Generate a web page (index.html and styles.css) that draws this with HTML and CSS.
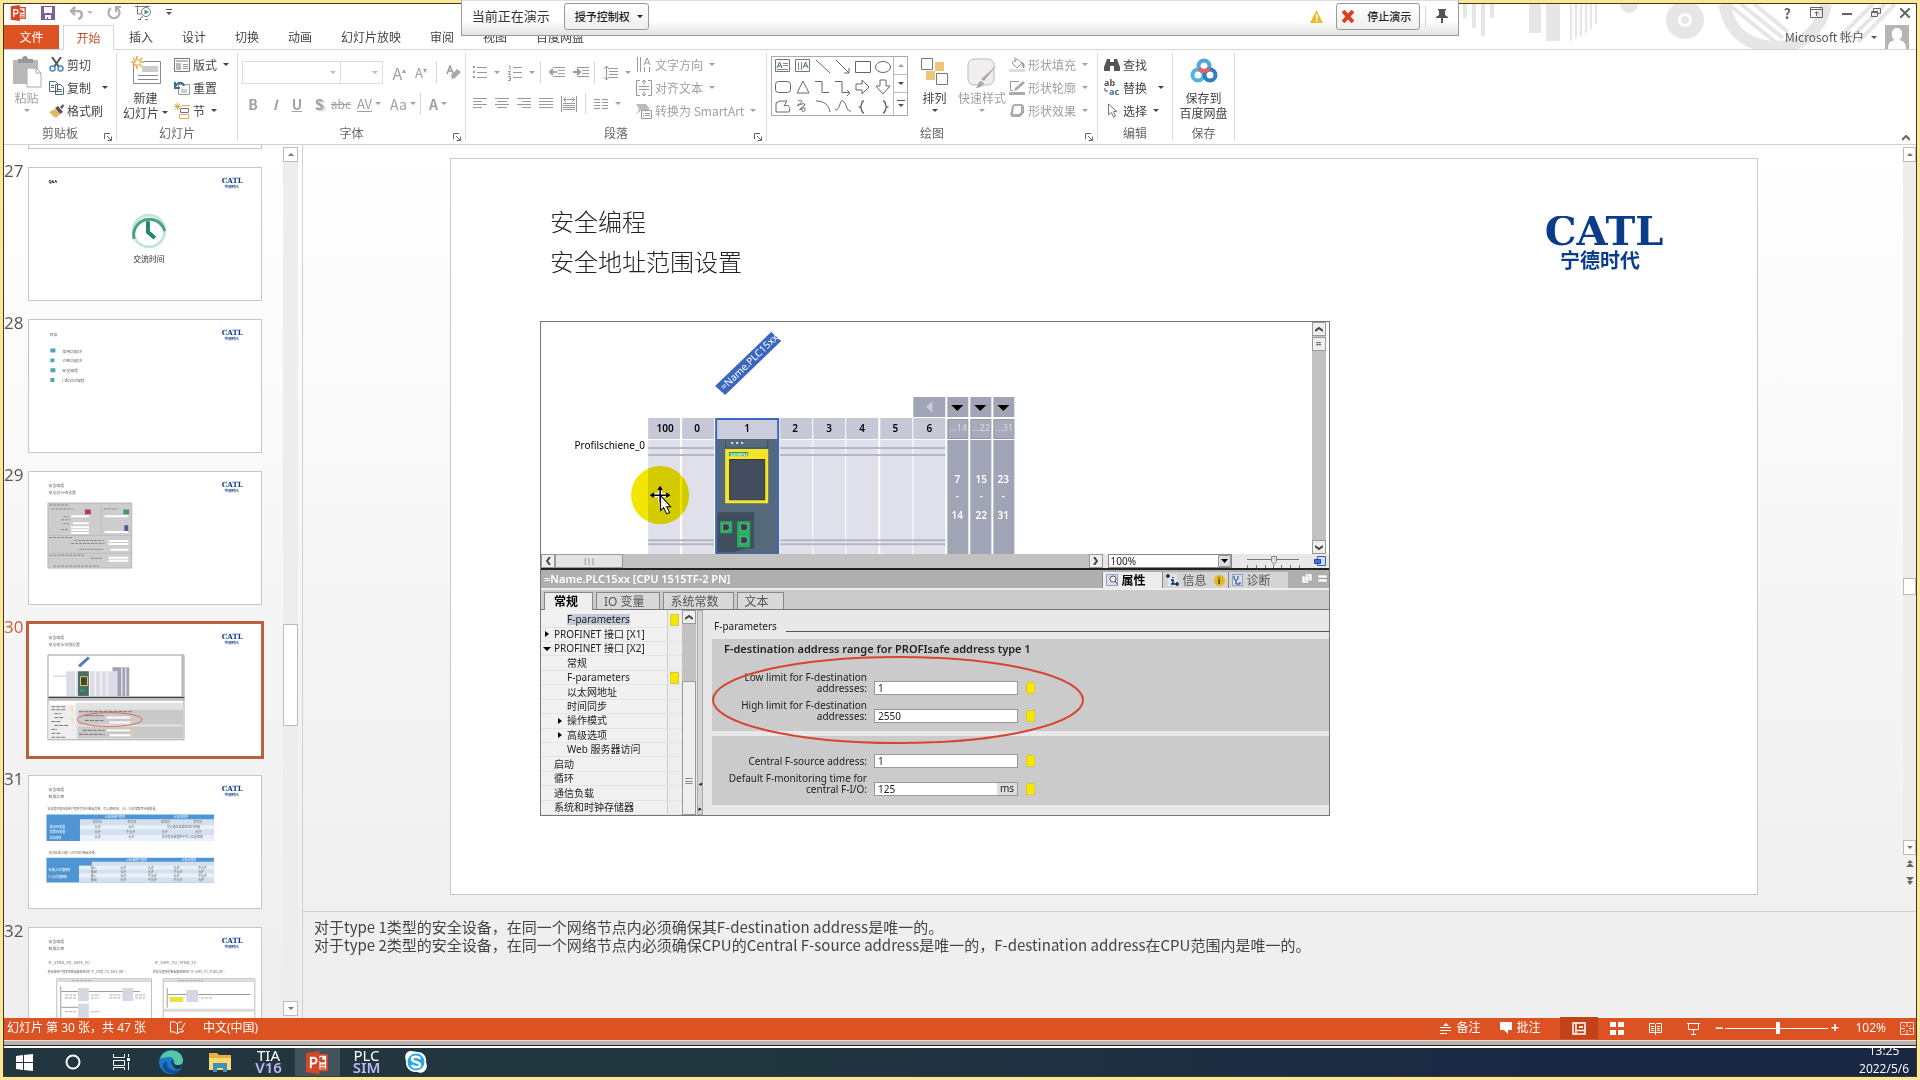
FILE: index.html
```html
<!DOCTYPE html>
<html lang="zh-CN">
<head>
    <meta charset="UTF-8">
    <meta name="viewport" content="width=device-width, initial-scale=1.0">
    <title>PowerPoint</title>
    <link rel="stylesheet" href="styles.css">
</head>
<body>
    <svg class="sprite">
        <symbol id="logo" viewBox="0 0 128 56">
            <text class="logo-latin" x="64" y="29" text-anchor="middle">CATL</text>
            <text class="logo-cn" x="60" y="52" text-anchor="middle">宁德时代</text>
        </symbol>
        <symbol id="ppt" viewBox="0 0 24 24">
            <path fill="#fff" stroke="#d24726" stroke-width="2" d="M12 4h10v16H12z"/>
            <path fill="#d24726" d="M0 2l14-2v24L0 22zM15 14h5v1.500h-5zM15 17h5v1.500h-5zM17 6a3 3 0 1 0 3 3h-3z"/>
            <path fill="none" stroke="#fff" stroke-width="2" d="M5 18V7h3a3 3 0 0 1 0 6H5"/>
        </symbol>
        <symbol id="launch" viewBox="0 0 8 8">
            <path fill="none" stroke="currentColor" d="M.5 6V.5H6M3 3l4 4M7.500 3.500v4h-4"/>
        </symbol>
        <symbol id="indent" viewBox="0 0 16 14">
            <path fill="none" stroke="currentColor" d="M4 1.500h12M9 4.500h7M9 7.500h7M4 10.500h12"/>
            <path fill="none" stroke="currentColor" stroke-width="2" d="M8 6H2M4 3L1 6l3 3"/>
        </symbol>
    </svg>

    <div class="desktop">
        <header class="titlebar">
            <div class="quick">
                <svg width="17" height="16" viewBox="0 0 24 24"><use href="#ppt"/></svg>
                <button aria-label="保存"><svg width="14" height="14" viewBox="0 0 14 14"><path fill="#7b5fa0" d="M0 0h14v14H0z"/><path fill="#fff" d="M3 1h8v6H3zM4 9h6v4H7v-2H6v2H4z"/></svg></button>
                <button aria-label="撤消"><svg width="15" height="14" viewBox="0 0 15 14"><path fill="none" stroke="#b0b0b0" stroke-width="2.500" d="M6 1L2 5l4 4M2 5h7c5 0 5 7 0 8"/></svg><i class="caret pale"></i></button>
                <button aria-label="重复"><svg width="14" height="14" viewBox="0 0 14 14"><path fill="none" stroke="#b0b0b0" stroke-width="2.200" d="M4 2a5.500 5.500 0 1 0 6 0M9 6V1h5"/></svg></button>
                <button aria-label="放映"><svg width="17" height="15" viewBox="0 0 17 15"><path fill="none" stroke="#777" d="M0 1.500h15M2.500 2v7h4M5 14l3-3M3 14.500h3M10 14.500h3"/><circle cx="11" cy="7" r="4.500" fill="#fff" stroke="#777"/><path fill="#4c8f8a" d="M9.500 4.500L14 7l-4.500 2.500z"/></svg></button>
                <button aria-label="自定义"><svg width="6" height="7" viewBox="0 0 6 7"><path fill="#555" d="M0 0h6v1H0zM0 3h6L3 6z"/></svg></button>
            </div>
            <svg class="pattern" width="440" height="45" viewBox="0 0 440 45">
                <g fill="none" stroke="#e6e6e6">
                    <path stroke-width="4" d="M2 0v14M11 0v24M20 0v32M29 0v14"/>
                    <path stroke-width="12" d="M72 0v29"/><path stroke-width="14" d="M90 0v37"/>
                    <path stroke-width="2" d="M108 0v37M113 0v34M118 0v32M123 0v29M128 0v25M133 0v20"/>
                    <circle cx="222" cy="16" r="13" stroke-width="12"/>
                    <path stroke-width="12" d="M261 0c6 30 25 42 52 43 28 0 46-20 50-43"/>
                    <path stroke-width="4" d="M265 0l50 40M278 0l42 34M291 0l34 28M395 38L432 0M388 34L422 0M380 30L410 0"/>
                </g>
                <circle cx="222" cy="16" r="4" fill="#e6e6e6"/><circle cx="166" cy="0" r="9" fill="#e6e6e6"/>
            </svg>
            <div class="winbuttons">
                <button>?</button>
                <button aria-label="功能区"><svg width="13" height="11" viewBox="0 0 13 11"><path fill="none" stroke="#666" d="M.5.5h12v10H.5zM1 2.500h11M6.500 9V5M4.500 6.500l2-2 2 2"/></svg></button>
                <button aria-label="最小化"><svg width="10" height="11"><path fill="#666" d="M0 6h10v2H0z"/></svg></button>
                <button aria-label="还原"><svg width="10" height="11" viewBox="0 0 10 11"><path fill="none" stroke="#666" d="M2.500 4V1.500h7v5H7M.5 4.500h6v5h-6zM0 5.500h7"/></svg></button>
                <button aria-label="关闭"><svg width="10" height="10" viewBox="0 0 10 10"><path stroke="#666" stroke-width="2" d="M0 0l10 10M10 0L0 10"/></svg></button>
            </div>
        </header>

        <nav class="tabs">
            <button class="file">文件</button>
            <button class="active">开始</button>
            <button>插入</button>
            <button>设计</button>
            <button>切换</button>
            <button>动画</button>
            <button>幻灯片放映</button>
            <button>审阅</button>
            <button>视图</button>
            <button>百度网盘</button>
            <a href="#" class="account">Microsoft 帐户 <i class="caret"></i>
                <svg width="24" height="24" viewBox="0 0 24 24"><path fill="#b5b5b5" d="M0 0h24v24H0z"/><path fill="#fff" d="M12 3c7 0 6 11 2 12 5 1 7 3 7 9H3c0-6 2-8 7-9C6 14 5 3 12 3z"/></svg>
            </a>
        </nav>

        <section class="ribbon">
            <div class="group clipboard">
                <div class="controls">
                    <button class="big off">
                        <svg width="30" height="32" viewBox="0 0 30 32"><path fill="#b9b9b9" d="M1 4h25v24H1z"/><path fill="#999" d="M6 3h4c0-4 6-4 6 0h5v4H6z"/><path fill="#fff" stroke="#aaa" d="M15 12h9l5 5v14H15z"/><path fill="none" stroke="#aaa" d="M24 12v5h5"/></svg>
                        <span>粘贴</span><i class="caret"></i>
                    </button>
                    <div class="stack">
                        <button><svg width="15" height="15" viewBox="0 0 15 15"><path stroke="#555" stroke-width="2" d="M3 0l7 10M12 0L5 10"/><g fill="none" stroke="#4a87b8" stroke-width="1.500"><circle cx="3.500" cy="11.500" r="2.500"/><circle cx="11.500" cy="11.500" r="2.500"/></g></svg>剪切</button>
                        <button><svg width="15" height="14" viewBox="0 0 15 14"><path fill="#fff" stroke="#4f6b82" d="M.5.5h6l2 2v8h-8zM6.500 3.500h5l3 3v7h-8z"/><path stroke="#4f6b82" d="M2 4.500h3M2 6.500h3M8 8.500h5M8 10.500h5"/></svg>复制<i class="caret wide"></i></button>
                        <button><svg width="15" height="14" viewBox="0 0 15 14"><path fill="#e6b668" d="M0 8l6-3 5 5-4 4-3-2z"/><path fill="#555" d="M6 4l3-2 5 6-3 2zM11 3l3-3 1 2-2 3z"/></svg>格式刷</button>
                    </div>
                </div>
                <footer>剪贴板<svg width="8" height="8"><use href="#launch"/></svg></footer>
            </div>

            <div class="group slides">
                <div class="controls">
                    <button class="big">
                        <svg width="30" height="30" viewBox="0 0 30 30"><path fill="#fff" stroke="#888" d="M2.500 5.500h27v22h-27z"/><path fill="#ccc" d="M11 10h16v6H11z"/><path stroke="#888" d="M7 19.500h20M7 23.500h20"/><path stroke="#e9bd6a" stroke-width="2" d="M6 0v13M0 6h13M2 2l9 9M11 2l-9 9"/><circle cx="6.500" cy="6.500" r="2" fill="#fff"/></svg>
                        <span>新建</span><span>幻灯片<i class="caret"></i></span>
                    </button>
                    <div class="stack">
                        <button><svg width="16" height="14" viewBox="0 0 16 14"><path fill="#fff" stroke="#777" d="M.5.500h15v13H.5z"/><path fill="#bbb" d="M2 2h12v2H2zM2 5h5v7H2z"/><path stroke="#999" d="M9 6.500h5M9 8.500h5M9 10.500h5"/></svg>版式<i class="caret"></i></button>
                        <button><svg width="16" height="14" viewBox="0 0 16 14"><path fill="#fff" stroke="#999" d="M4.500 3.500h11v10h-11z"/><path fill="#ccc" d="M7 8h6v4H7z"/><path fill="none" stroke="#3b6f97" stroke-width="2" d="M1 1v6h5M1 6c3-6 8-5 9-1"/></svg>重置</button>
                        <button><svg width="16" height="16" viewBox="0 0 16 16"><path stroke="#e3ab55" d="M3.500 0v7M0 3.500h7M1 1l5 5M6 1L1 6M8 2.500h8"/><path fill="none" stroke="#777" d="M6.500 5.500h8v4h-8z"/><path fill="none" stroke="#e3ab55" d="M5.500 11.500h9v4h-9z"/></svg>节<i class="caret"></i></button>
                    </div>
                </div>
                <footer>幻灯片</footer>
            </div>

            <div class="group font off">
                <div class="controls rows">
                    <div class="line">
                        <select class="face" aria-label="字体"><option></option></select><select class="size" aria-label="字号"><option></option></select>
                        <button class="big-a">A<sup>▴</sup></button>
                        <button class="small-a">A<sup>▾</sup></button>
                        <i class="bar"></i>
                        <button aria-label="清除格式"><svg width="15" height="15" viewBox="0 0 15 15"><path fill="none" stroke="#999" stroke-width="1.500" d="M1 9l3-8 3 7M2 6h4"/><path fill="#aaa" d="M5 10l6-6 4 3-6 6-3 1z"/></svg></button>
                    </div>
                    <div class="line letters">
                        <button><b>B</b></button><button><b><em>I</em></b></button><button><b><u>U</u></b></button><button><b class="shadow">S</b></button><button><s>abc</s></button>
                        <button class="drop"><span class="spacing">AV</span><i class="caret"></i></button>
                        <button class="drop">Aa<i class="caret"></i></button>
                        <i class="bar"></i>
                        <button class="drop"><b>A</b><i class="caret"></i></button>
                    </div>
                </div>
                <footer>字体<svg width="8" height="8"><use href="#launch"/></svg></footer>
            </div>

            <div class="group paragraph off">
                <div class="controls">
                    <div class="rows">
                        <div class="line">
                            <button class="drop"><svg width="14" height="15" viewBox="0 0 14 15"><path stroke="#999" d="M4 2.500h10M4 7.500h10M4 12.500h10"/><path fill="#999" d="M0 1h2v2H0zM0 6h2v2H0zM0 11h2v2H0z"/></svg><i class="caret"></i></button>
                            <button class="drop"><svg width="14" height="16" viewBox="0 0 14 16"><path stroke="#999" d="M5 2.500h9M5 7.500h9M5 12.500h9"/><path fill="none" stroke="#999" d="M1 1h1v4M0 6.500h2.500L.500 9.500H3M0 11.500h2.500v4H0M1 13.500h1"/></svg><i class="caret"></i></button>
                            <i class="bar"></i>
                            <button><svg width="16" height="14"><use href="#indent"/></svg></button>
                            <button><svg width="16" height="14" viewBox="0 0 16 14"><path fill="none" stroke="#999" d="M4 1.500h12M9 4.500h7M9 7.500h7M4 10.500h12"/><path fill="none" stroke="#999" stroke-width="2" d="M0 6h7M4 3l3 3-3 3"/></svg></button>
                            <i class="bar"></i>
                            <button class="drop"><svg width="15" height="16" viewBox="0 0 15 16"><path fill="none" stroke="#999" d="M6 3.500h9M6 6.500h9M6 9.500h9M6 12.500h9M3.500 1v14M1 4l2.500-3L6 4M1 12l2.500 3L6 12"/></svg><i class="caret"></i></button>
                        </div>
                        <div class="line aligns">
                            <button><svg width="14" height="12" viewBox="0 0 14 12"><path stroke="#999" d="M0 .5h14M0 3.500h9M0 6.500h14M0 9.500h9"/></svg></button>
                            <button><svg width="14" height="12" viewBox="0 0 14 12"><path stroke="#999" d="M0 .5h14M2 3.500h10M0 6.500h14M2 9.500h10"/></svg></button>
                            <button><svg width="14" height="12" viewBox="0 0 14 12"><path stroke="#999" d="M0 .5h14M5 3.500h9M0 6.500h14M5 9.500h9"/></svg></button>
                            <button><svg width="14" height="12" viewBox="0 0 14 12"><path stroke="#999" d="M0 .5h14M0 3.500h14M0 6.500h14M0 9.500h14"/></svg></button>
                            <button><svg width="16" height="16" viewBox="0 0 16 16"><path fill="none" stroke="#999" d="M.5 0v16M15.500 0v16M3 3.500h10M5 1L2.500 3.500 5 6M11 1l2.500 2.500L11 6M2 7.500h12M2 9.500h12M2 11.500h12M2 13.500h12"/></svg></button>
                            <i class="bar"></i>
                            <button class="drop"><svg width="14" height="12" viewBox="0 0 14 12"><path stroke="#999" d="M0 1.500h6M8 1.500h6M0 4.500h6M8 4.500h6M0 7.500h6M8 7.500h6M0 10.500h6M8 10.500h6"/></svg><i class="caret"></i></button>
                        </div>
                    </div>
                    <div class="stack">
                        <button><svg width="16" height="16" viewBox="0 0 16 16"><path fill="none" stroke="#999" d="M1.500 0v15M4.500 0v15M8.500 10v5M13.500 10v5M8 8l3-7 3 7M9 6h4"/></svg>文字方向<i class="caret"></i></button>
                        <button><svg width="16" height="16" viewBox="0 0 16 16"><path fill="none" stroke="#999" d="M4 .5H.5v15H4M12 .5h3.500v15H12M3 6.500h10M3 9.500h10M8 0v5M6 2l2-2 2 2M8 11v5M6 14l2 2 2-2"/></svg>对齐文本<i class="caret"></i></button>
                        <button><svg width="16" height="16" viewBox="0 0 16 16"><path fill="#bbb" d="M0 1h10l4 5-3 1H5l-5 5 3-6z"/><path fill="#fff" stroke="#999" d="M5.500 7.500h10v8h-10z"/><path stroke="#999" d="M7 10.500h1M9 10.500h5M7 12.500h1M9 12.500h5"/></svg>转换为 SmartArt<i class="caret"></i></button>
                    </div>
                </div>
                <footer>段落<svg width="8" height="8"><use href="#launch"/></svg></footer>
            </div>

            <div class="group drawing">
                <div class="controls">
                    <div class="gallery">
                        <svg class="shapes" width="121" height="58" viewBox="0 0 121 58" role="img" aria-label="形状">
                            <g fill="none" stroke="#666">
                                <path d="M3.500 2.500h14v12h-14zM23.500 2.500h14v12h-14z" stroke="#777"/>
                                <path stroke="#3b6f97" d="M5 11l2.500-6 2.500 6M6 9h3M31 11l2.500-6 2.500 6M32 9h3"/>
                                <path stroke="#888" d="M11 6.500h5M11 8.500h5M5 12.500h11M26.500 5v8M29.500 5v8"/>
                                <path d="M44 3l14 13M64 3l13 13M77 11v5h-5M83.500 4.500h15v11h-15z"/><ellipse cx="111" cy="10" rx="7.500" ry="5.500"/>
                                <rect x="3.500" y="24.500" width="15" height="11" rx="3"/>
                                <path d="M31 24l6 12H25zM43 24.500h7v11h7M63 24.500h7v11h8M75 33l3 3-3 3M84 27h6v-4l7 7-7 7v-4h-6zM108 23h6v6h4l-7 8-7-8h4z"/>
                                <path d="M4 53V46l4-2h7l-3 5c5-2 7 1 5 6H4zM26 44c5-2 5 1 0 4-4 3 7-4 7 0l-5 4c-2 3 5-4 5 0s-4 3-3 0M44 44c8 0 13 4 14 11M63 53c6 0 4-11 8-9s3 11 8 10"/>
                                <path stroke-width="1.500" d="M92 44c-4 0-1 5-4 6 3 1 0 5 4 6M111 44c4 0 1 5 4 6-3 1 0 5-4 6"/>
                            </g>
                        </svg>
                        <div class="gallery-nav">
                            <button class="off" aria-label="上"><i class="caret up"></i></button>
                            <button aria-label="下"><i class="caret"></i></button>
                            <button aria-label="更多"><svg width="8" height="8" viewBox="0 0 8 8"><path fill="#555" d="M0 0h8v1H0zM1 4h6L4 7z"/></svg></button>
                        </div>
                    </div>
                    <button class="big arrange">
                        <svg width="28" height="32" viewBox="0 0 28 32"><path fill="#ecc578" d="M14 6h9v9h-9zM5 15h9v9H5z"/><path fill="#fff" stroke="#777" d="M.5 2.500h11v11H.5zM15.500 17.500h11v11h-11z"/></svg>
                        <span>排列</span><i class="caret"></i>
                    </button>
                    <button class="big off styles">
                        <svg width="32" height="32" viewBox="0 0 32 32"><rect x="2" y="3" width="26" height="26" rx="6" fill="#f1eef0" stroke="#bbb"/><path fill="#aaa" d="M31 9L18 25l-3-2zM9 32c3 0 2-6 6-7l3 2c-1 4-5 5-9 5z"/></svg>
                        <span>快速样式</span><i class="caret"></i>
                    </button>
                    <div class="stack off">
                        <button><svg width="16" height="16" viewBox="0 0 16 16"><path fill="#ddd" d="M0 12h16v3H0z"/><path fill="none" stroke="#999" d="M3 6l5-4 5 4-5 5zM6 5V0"/><path fill="#999" d="M13 5c3 1 3 5 2 6s-2-2-2-6z"/></svg>形状填充<i class="caret"></i></button>
                        <button><svg width="16" height="16" viewBox="0 0 16 16"><path fill="#aaa" d="M0 12h16v3H0zM14 1l2 2-8 7-3 1 1-3z"/><path fill="none" stroke="#999" d="M10 1.500H1.500v9H4"/></svg>形状轮廓<i class="caret"></i></button>
                        <button><svg width="16" height="14" viewBox="0 0 16 14"><path fill="#aaa" d="M3 2l2-2h8l2 2v7l-4 4H3l-2-2z"/><path fill="#fff" d="M5 2h7v6l-2 2H4z"/></svg>形状效果<i class="caret"></i></button>
                    </div>
                </div>
                <footer>绘图<svg width="8" height="8"><use href="#launch"/></svg></footer>
            </div>

            <div class="group editing">
                <div class="controls">
                    <div class="stack">
                        <button><svg width="16" height="14" viewBox="0 0 16 14"><path fill="#555" d="M3 1h3v3h4V1h3l3 8v4h-6V8H6v5H0V9z"/></svg>查找</button>
                        <button><svg width="16" height="17" viewBox="0 0 16 17"><text class="ab" x="0" y="7">ab</text><text class="ac" x="5" y="16">ac</text><path fill="none" stroke="#555" d="M1 9v3h3"/></svg>替换<i class="caret wide"></i></button>
                        <button><svg width="16" height="15" viewBox="0 0 16 15"><path fill="#fff" stroke="#777" d="M4.500 1v11l3-2.500 2 4.500 2-1-2-4.500h3.500z"/></svg>选择<i class="caret"></i></button>
                    </div>
                </div>
                <footer>编辑</footer>
            </div>

            <div class="group save">
                <div class="controls">
                    <button class="big">
                        <svg width="28" height="32" viewBox="0 0 28 32"><g fill="none" stroke-width="4"><circle cx="14" cy="10" r="5.500" stroke="#4ba6d9"/><circle cx="8" cy="19" r="5.500" stroke="#4fb4e0"/><circle cx="20" cy="19" r="5.500" stroke="#2f7fc0"/><path stroke="#e0606c" d="M9 12c2 4 8 4 10 0"/></g></svg>
                        <span>保存到</span><span>百度网盘</span>
                    </button>
                </div>
                <footer>保存</footer>
            </div>
            <button class="collapse" aria-label="折叠功能区"><svg width="8" height="6" viewBox="0 0 8 6"><path fill="none" stroke="#666" stroke-width="2" d="M0 5l4-4 4 4"/></svg></button>
        </section>

        <main class="workspace">
            <aside class="outline">
                <ol class="thumbs">
                    <li class="tail"><div class="thumb"></div></li>
                    <li><span>27</span><div class="thumb"><svg viewBox="0 0 234 134">
                        <text class="t4 strong" x="19" y="15">Q&amp;A</text>
                        <use href="#logo" x="194" y="9" width="23" height="13"/>
                        <circle cx="121" cy="64" r="16" fill="none" stroke="#c3e6dc" stroke-width="3"/>
                        <path fill="none" stroke="#4f9f88" stroke-width="3" d="M106 72a16 16 0 1 1 31-8"/>
                        <path fill="none" stroke="#22856a" stroke-width="4" d="M120 54v11l7 6"/>
                        <text class="t8" x="121" y="95" text-anchor="middle">交流时间</text>
                    </svg></div></li>
                    <li><span>28</span><div class="thumb"><svg viewBox="0 0 234 134">
                        <text class="t4" x="20" y="16">目录</text>
                        <use href="#logo" x="194" y="9" width="23" height="13"/>
                        <path fill="#4ba3b8" d="M21 29h5v4h-5zM21 39h4v4h-4zM21 49h5v4h-5zM21 59h4v4h-4z"/>
                        <text class="t4" x="33" y="33">常用功能块</text><text class="t4" x="33" y="43">诊断功能块</text>
                        <text class="t4" x="33" y="53">安全编程</text><text class="t4" x="33" y="63">I-device编程</text>
                    </svg></div></li>
                    <li><span>29</span><div class="thumb"><svg viewBox="0 0 234 134">
                        <text class="t4" x="19" y="15">安全编程</text><text class="t4" x="19" y="22">安全运行组设置</text>
                        <use href="#logo" x="194" y="9" width="23" height="13"/>
                        <path fill="#cdcdcd" stroke="#b5b5b5" d="M18.500 31.500h85v66h-85z"/>
                        <path fill="#bdbdbd" d="M72 34h1v29h-1zM19 64h84v1H19zM19 82h84v1H19z"/>
                        <path fill="#fff" d="M42 44h18v2H42zM44 51h16v2H44zM42 55h18v2H42zM42 58h18v2H42zM42 61h18v2H42zM76 44h24v2H76zM76 60h24v2H76zM80 69h20v2H80zM80 72h20v2H80zM82 78h18v2H82zM80 86h20v2H80zM80 89h20v2H80z"/>
                        <path stroke="#888" stroke-dasharray="3 1" d="M20 33.500h20M22 37.500h22M75 37.500h14M34 45.500h6M32 48.500h9M34 52.500h6M32 58.500h8M20 66.500h24M45 69.500h30M42 72.500h34M50 78.500h25M20 84.500h36M62 87.500h12M24 95.500h46"/>
                        <path fill="#b43c56" d="M56 38h6v5h-6z"/><path fill="#3f9a70" d="M95 38h6v5h-6z"/><path fill="#4c5a9c" d="M96 54h4v6h-4z"/>
                    </svg></div></li>
                    <li class="current"><span>30</span><div class="thumb"><svg viewBox="0 0 234 134">
                        <text class="t4" x="19" y="15">安全编程</text><text class="t4" x="19" y="22">安全地址范围设置</text>
                        <use href="#logo" x="194" y="9" width="23" height="13"/>
                        <path fill="#fff" stroke="#999" d="M18.500 31.500h138v86h-138z"/>
                        <path stroke="#5078c0" stroke-width="3" d="M50 43l10-9"/>
                        <path fill="#dcdce6" d="M37 48h52v25H37z"/><path fill="#9fa2b4" d="M84 44h17v4H84zM89 48h12v25H89z"/>
                        <path stroke="#fff" d="M46.500 48v25M60.500 48v25M66.500 48v25M72.500 48v25M78.500 48v25M93.500 44v29M97.500 44v29"/>
                        <path fill="#4d6a70" d="M49 48h11v25H49z"/><path fill="#3c4250" stroke="#e8d82a" d="M51.500 53.500h7v9h-7z"/><path fill="#2f9a55" d="M51 66h5v3h-5z"/>
                        <path stroke="#999" stroke-width=".500" d="M24 53h13"/>
                        <path fill="#bbb" d="M154 32h3v42h-3zM19 73h138v5H19z"/><path fill="#444" d="M19 74h138v1H19z"/>
                        <path fill="#eee" d="M19 82h28v35H19z"/><path fill="#e2e2e2" d="M47 80h109v37H47z"/><path fill="#c9c9c9" d="M49 87h107v15H49zM49 104h107v12H49z"/>
                        <path fill="#fff" d="M78 94h24v2H78zM81 99h21v2H81zM78 107h24v2H78zM81 112h21v2H81z"/>
                        <path stroke="#777" stroke-dasharray="4 1" d="M22 84h14M22 87h15M25 91h7M25 95h9M22 99h9M25 103h14M22 107h6M22 111h10M22 115h14M50 89h54M56 93h20M56 98h20M54 108h22M50 112h26"/>
                        <path stroke="#e8e260" d="M104 94v8M104 107v8M43 83v6M43 95v6"/>
                        <ellipse cx="81" cy="97" rx="33" ry="7" fill="none" stroke="#d9695a"/>
                    </svg></div></li>
                    <li><span>31</span><div class="thumb"><svg viewBox="0 0 234 134">
                        <text class="t4" x="19" y="15">安全编程</text><text class="t4" x="19" y="22">数据交换</text>
                        <use href="#logo" x="194" y="9" width="23" height="13"/>
                        <text class="t3" x="18" y="35">安全程序和标准用户程序可进行数据交换，可以使用DB、I/O、位存储器等传输变量。</text>
                        <path fill="#4f95d3" d="M17 39h170v27H17z"/><path fill="#d2e0f0" d="M51 44h136v22H51z"/><path fill="#eaf0f8" d="M51 50h136v4H51zM51 60h136v6H51z"/>
                        <g class="head"><text class="t3" x="76" y="43">从标准用户程序</text><text class="t3" x="146" y="43">从安全程序</text><text class="t3" x="20" y="53">全局DB变量</text><text class="t3" x="20" y="58">背景DB变量</text><text class="t3" x="20" y="64">位存储器</text></g>
                        <text class="t3" x="64" y="48">读访问</text><text class="t3" x="99" y="48">写访问</text><text class="t3" x="133" y="48">读访问</text><text class="t3" x="166" y="48">写访问</text>
                        <text class="t3" x="66" y="53">允许</text><text class="t3" x="100" y="53">允许</text><text class="t3" x="139" y="53">可以通过标准DB进行传输</text>
                        <text class="t3" x="66" y="58">允许</text><text class="t3" x="98" y="58">不允许</text><text class="t3" x="134" y="58">允许</text><text class="t3" x="168" y="58">允许</text>
                        <text class="t3" x="66" y="63">允许</text><text class="t3" x="100" y="63">允许</text><text class="t3" x="134" y="63">仅可在标准程序中写入位存储器</text>
                        <text class="t3" x="19" y="79">访问标准I/O和F-I/O可进行数据交换。</text>
                        <path fill="#4f95d3" d="M17 83h170v25H17z"/><path fill="#d2e0f0" d="M63 87h124v4H63zM50 91h137v17H50z"/><path fill="#eaf0f8" d="M50 91h137v4H50zM50 99h137v4H50z"/>
                        <g class="head"><text class="t3" x="98" y="86">从标准用户程序</text><text class="t3" x="154" y="86">从安全程序</text><text class="t3" x="19" y="96">标准I/O过程映像</text><text class="t3" x="19" y="104">F-I/O过程映像</text></g>
                        <text class="t3" x="62" y="94">输入</text><text class="t3" x="92" y="94">允许</text><text class="t3" x="120" y="94">允许</text><text class="t3" x="146" y="94">允许</text><text class="t3" x="171" y="94">不允许</text>
                        <text class="t3" x="62" y="98">输出</text><text class="t3" x="92" y="98">允许</text><text class="t3" x="120" y="98">允许</text><text class="t3" x="146" y="98">不允许</text><text class="t3" x="171" y="98">允许</text>
                        <text class="t3" x="62" y="103">输入</text><text class="t3" x="92" y="103">允许</text><text class="t3" x="120" y="103">不允许</text><text class="t3" x="146" y="103">允许</text><text class="t3" x="171" y="103">不允许</text>
                        <text class="t3" x="62" y="107">输出</text><text class="t3" x="92" y="107">允许</text><text class="t3" x="120" y="107">不允许</text><text class="t3" x="146" y="107">不允许</text><text class="t3" x="171" y="107">允许</text>
                    </svg></div></li>
                    <li><span>32</span><div class="thumb"><svg viewBox="0 0 234 134">
                        <text class="t4" x="19" y="15">安全编程</text><text class="t4" x="19" y="22">数据交换</text>
                        <use href="#logo" x="194" y="9" width="23" height="13"/>
                        <text class="t4" x="19" y="37">IF_STND_TO_SAFE_FC</text><text class="t4" x="127" y="37">IF_SAFE_TO_STND_FC</text>
                        <text class="t3" x="18" y="46">将标准用户程序的数据复制到DB "IF_STND_TO_SAFE_DB"：</text><text class="t3" x="125" y="46">将安全程序的数据复制到DB "IF_SAFE_TO_STND_DB"：</text>
                        <path fill="#fff" stroke="#bbb" d="M27.500 51.500h96v83h-96zM135.500 51.500h93v83h-93z"/><path fill="#dcdcdc" d="M28 52h95v3H28zM136 52h92v3h-92zM136 82h92v3h-92z"/>
                        <path fill="none" stroke="#999" d="M31.500 59v40M32 64.500h80M32 80.500h28M139.500 61v20M140 67.500h84"/>
                        <path fill="#d5d8e2" d="M49 61h11v13H49zM94 61h11v13H94zM49 77h11v14H49zM159 63h12v12h-12z"/><path fill="#ece23e" d="M142 70h14v5h-14z"/>
                        <path stroke="#aaa" stroke-dasharray="3 1" d="M36 68h11M36 71h11M62 68h9M62 71h9M81 68h11M81 71h11M107 68h10M107 71h10M36 85h11M62 85h9M174 71h12M43 53.500h20M150 53.500h26"/>
                    </svg></div></li>
                </ol>
                <div class="scroll left-scroll">
                    <button aria-label="上移"><i class="caret up"></i></button>
                    <div class="track"><b></b></div>
                    <button aria-label="下移"><i class="caret"></i></button>
                </div>
            </aside>

            <div class="editor">
                <div class="stage">
                    <div class="canvas">
                        <article class="slide">
                            <div class="slide-head">
                                <h1>安全编程<br>安全地址范围设置</h1>
                                <svg class="logo" width="128" height="56" role="img" aria-label="CATL"><use href="#logo"/></svg>
                            </div>

                            <div class="tia">
                                <div class="device">
                                    <svg class="rack" viewBox="0 0 770 232">
                                        <g class="label"><path fill="#3a66c0" d="M174 64l10 9 56-54-10-9z"/><text transform="translate(183 69) rotate(-44)">=Name.PLC15xx</text></g>
                                        <path fill="#c6c8d7" d="M107 96h32v21h-32zM141 96h32v21h-32zM239 96h32v21h-32zM272 96h32v21h-32zM305 96h32v21h-32zM339 96h32v21h-32zM372 96h32v21h-32z"/>
                                        <path fill="#dfe0ea" d="M107 118h32v114h-32zM141 118h32v114h-32zM239 118h32v114h-32zM272 118h32v114h-32zM305 118h32v114h-32zM339 118h32v114h-32zM372 118h32v114h-32z"/>
                                        <path stroke="#b5b6c6" stroke-width="2" d="M107 126h66M239 126h165M107 133h66M239 133h165M107 218h66M239 218h165M107 222h66M239 222h165"/>
                                        <path fill="#a1a4b5" d="M372 75h32v20h-32zM406 75h21v20h-21zM429 75h21v20h-21zM452 75h21v20h-21zM406 118h21v114h-21zM429 118h21v114h-21zM452 118h21v114h-21z"/>
                                        <path fill="#a8aabb" stroke="#9395a6" d="M406.500 97.500h20v19h-20zM429.500 97.500h20v19h-20zM452.500 97.500h20v19h-20z"/>
                                        <path fill="#c9cbd8" d="M391 79v12l-6-6z"/><path d="M410 83h12l-6 6zM433 83h12l-6 6zM456 83h12l-6 6z"/>
                                        <path fill="#56697c" stroke="#3c69ba" stroke-width="2" d="M175 97h62v135h-62z"/><path fill="#cbcddd" d="M176 98h60v19h-60z"/>
                                        <path fill="none" stroke="#3f5263" d="M184.500 118v8h42v-8"/><path fill="#dfe4ea" d="M190 120h2v2h-2zM195 120h2v2h-2zM200 120h2v2h-2z"/>
                                        <path fill="#f3e52b" d="M184 127h43v54h-43z"/><path fill="#434d5f" stroke="#3a3a30" d="M188.500 137.500h35v40h-35z"/>
                                        <path fill="#1f8f4d" d="M188 130h19v4h-19z"/><text class="siemens" x="189" y="134">SIEMENS</text>
                                        <path fill="#414e5d" d="M176 190h37v36h-8l-12 4h-17z"/><path fill="#1fb35a" d="M179 199h12v12h-12zM196 199h13v26h-13z"/>
                                        <path fill="#333f4a" stroke="#79a595" d="M181.500 201.500h5l2 2v3l-2 2h-5zM199.500 201.500h5l2 2v3l-2 2h-5zM199.500 214.500h5l2 2v3l-2 2h-5z"/>
                                        <g class="slots"><text x="124" y="110">100</text><text x="156" y="110">0</text><text x="206" y="110">1</text><text x="254" y="110">2</text><text x="288" y="110">3</text><text x="321" y="110">4</text><text x="354" y="110">5</text><text x="388" y="110">6</text></g>
                                        <g class="ranges"><g class="dim"><text x="417" y="109">...14</text><text x="440" y="109">...22</text><text x="463" y="109">...31</text></g>
                                            <text x="416" y="161">7</text><text x="440" y="161">15</text><text x="462" y="161">23</text><text x="416" y="178">-</text><text x="440" y="178">-</text><text x="462" y="178">-</text><text x="416" y="197">14</text><text x="440" y="197">22</text><text x="462" y="197">31</text></g>
                                        <text class="rail" x="104" y="127" text-anchor="end">Profilschiene_0</text>
                                        <circle class="halo" cx="119" cy="173" r="29"/>
                                        <path fill="none" stroke="#fff" stroke-width="4" d="M119 166v14M112 173h14"/>
                                        <path fill="none" stroke="#000" stroke-width="1.500" d="M119 166v14M111 173h16M117 168l2-3 2 3M113 171l-3 2 3 2M125 171l3 2-3 2"/>
                                        <path fill="#fff" stroke="#000" d="M119.500 173.500v15l3-3 3 6 3-1-3-6h4z"/>
                                    </svg>
                                    <div class="tia-vscroll"><button aria-label="上"><svg width="8" height="5" viewBox="0 0 8 5"><path d="M0 4l4-3 4 3"/></svg></button><b>=</b><button aria-label="下"><svg width="8" height="5" viewBox="0 0 8 5"><path d="M0 1l4 3 4-3"/></svg></button></div>
                                </div>
                                <div class="zoomrow">
                                    <button aria-label="左"><svg width="5" height="8" viewBox="0 0 5 8"><path d="M4 0L1 4l3 4"/></svg></button><b>|||</b><span></span><button aria-label="右"><svg width="5" height="8" viewBox="0 0 5 8"><path d="M1 0l3 4-3 4"/></svg></button>
                                    <select aria-label="缩放"><option>100%</option></select>
                                    <svg width="56" height="14" viewBox="0 0 56 14"><path fill="none" stroke="#777" d="M2 5.500h52M2.500 11v3M11.500 11v3M20.500 11v3M28.500 11v3M36.500 11v3M45.500 11v3M54.500 11v3"/><path fill="#ddd" stroke="#888" d="M26.500 2.500h5v5l-2.500 3-2.500-3z"/></svg>
                                    <svg class="fit" width="12" height="12" viewBox="0 0 12 12"><path fill="#cfdcf5" stroke="#3a5cb5" d="M3.500 1.500h8v9h-8z"/><path fill="#3f6ee0" stroke="#274a9c" d="M.5 4.500h6v4h-6z"/></svg>
                                </div>
                                <div class="inspector-title">
                                    <strong>=Name.PLC15xx [CPU 1515TF-2 PN]</strong>
                                    <button class="on"><svg width="12" height="12" viewBox="0 0 12 12"><path fill="#d4def0" stroke="#8fa0c0" d="M.5.500h11v11H.5z"/><circle cx="7" cy="5" r="3" fill="#fff" stroke="#555"/><path stroke="#555" d="M9 7l3 4"/></svg>属性</button>
                                    <button class="message"><svg width="13" height="12" viewBox="0 0 13 12"><path fill="#dde5f3" d="M2 0h9v12H2z"/><path fill="none" stroke="#13204e" stroke-width="1.500" d="M0 2h4M2 0v4M7 3v1M5 6h2v4M5 10h8M11 8v4"/></svg>信息<i class="info">i</i></button>
                                    <button><svg width="11" height="12" viewBox="0 0 11 12"><path fill="#d4def0" stroke="#8fa0c0" d="M.5.500h10v11H.5z"/><path fill="none" stroke="#28406e" d="M2 2v2c0 3 4 3 4 0V2M4 6v4h4V8"/></svg>诊断</button>
                                    <svg class="wins" width="26" height="10" viewBox="0 0 26 10"><path fill="#fff" stroke="#999" stroke-width=".500" d="M3 0h7v7H3zM0 2h7v7H0zM16 1h9v3h-9zM16 5h9v3h-9z"/></svg>
                                </div>
                                <div class="tia-tabs"><button class="on">常规</button><button>IO 变量</button><button>系统常数</button><button>文本</button></div>
                                <div class="inspector">
                                    <ul class="tree">
                                        <li class="l2 flag"><mark>F-parameters</mark></li>
                                        <li class="closed">PROFINET 接口 [X1]</li>
                                        <li class="open">PROFINET 接口 [X2]</li>
                                        <li class="l2">常规</li>
                                        <li class="l2 flag">F-parameters</li>
                                        <li class="l2">以太网地址</li>
                                        <li class="l2">时间同步</li>
                                        <li class="l2 closed">操作模式</li>
                                        <li class="l2 closed">高级选项</li>
                                        <li class="l2">Web 服务器访问</li>
                                        <li>启动</li>
                                        <li>循环</li>
                                        <li>通信负载</li>
                                        <li>系统和时钟存储器</li>
                                    </ul>
                                    <div class="tree-scroll"><button aria-label="上"><svg width="8" height="5" viewBox="0 0 8 5"><path d="M0 4l4-3 4 3"/></svg></button><b>≡</b></div>
                                    <div class="splitter"><i>◂</i><i>▸</i></div>
                                    <form class="params">
                                        <h2>F-parameters</h2>
                                        <fieldset>
                                            <h3>F-destination address range for PROFIsafe address type 1</h3>
                                            <div class="field"><label for="low">Low limit for F-destination<br>addresses:</label><input id="low" value="1"><i></i></div>
                                            <div class="field"><label for="high">High limit for F-destination<br>addresses:</label><input id="high" value="2550"><i></i></div>
                                        </fieldset>
                                        <fieldset class="second">
                                            <div class="field"><label for="source">Central F-source address:</label><input id="source" value="1"><i></i></div>
                                            <div class="field"><label for="time">Default F-monitoring time for<br>central F-I/O:</label><span class="unit"><input id="time" value="125"><em>ms</em></span><i></i></div>
                                        </fieldset>
                                        <svg class="ring" width="376" height="90" viewBox="0 0 376 90"><ellipse cx="188" cy="45" rx="185" ry="43"/></svg>
                                    </form>
                                </div>
                            </div>
                        </article>
                    </div>
                    <div class="scroll right-scroll">
                        <button aria-label="上移"><i class="caret up"></i></button>
                        <div class="track"><b></b></div>
                        <button aria-label="下移"><i class="caret"></i></button>
                        <button class="page" aria-label="上一张"><svg width="8" height="8" viewBox="0 0 8 8"><path d="M4 0l3 3H1zM4 3l4 4H0z"/></svg></button>
                        <button class="page" aria-label="下一张"><svg width="8" height="8" viewBox="0 0 8 8"><path d="M0 0h8L4 4zM1 4h6L4 8z"/></svg></button>
                    </div>
                </div>
                <div class="notes">
                    <p>对于type 1类型的安全设备，在同一个网络节点内必须确保其F-destination address是唯一的。</p>
                    <p>对于type 2类型的安全设备，在同一个网络节点内必须确保CPU的Central F-source address是唯一的，F-destination address在CPU范围内是唯一的。</p>
                </div>
            </div>
        </main>

        <footer class="status">
            <span>幻灯片 第 30 张，共 47 张</span>
            <svg class="spell" width="16" height="14" viewBox="0 0 16 14"><path fill="none" stroke="#fff" d="M7 2.500C5 .5 3 .5.500 1v10c3-.500 5 0 6.500 2 1-2 3-2.500 6-2V9M7.500 2v11M9 7l2 2 4-7M8 2c1-1 2-1 4-1"/></svg>
            <span>中文(中国)</span>
            <div class="views">
                <button class="text"><svg width="12" height="12" viewBox="0 0 12 12"><path fill="#fff" d="M3 4l3-3 3 3zM0 5h11v1H0zM0 8h11v1H0zM0 11h7v1H0z"/></svg>备注</button>
                <button class="text"><svg width="12" height="12" viewBox="0 0 12 12"><path fill="#fff" d="M0 0h12v8H8v4L4 8H0z"/></svg>批注</button>
                <button class="view on" aria-label="普通视图"><svg width="14" height="13" viewBox="0 0 14 13"><path fill="none" stroke="#fff" stroke-width="1.500" d="M1 1h12v11H1zM4 1v11M5 8.500h8"/><path fill="#fff" d="M7 4h4v2H7z"/></svg></button>
                <button class="view" aria-label="幻灯片浏览"><svg width="14" height="13" viewBox="0 0 14 13"><path fill="#fff" d="M0 0h6v5H0zM8 0h6v5H8zM0 8h6v5H0zM8 8h6v5H8z"/></svg></button>
                <button class="view" aria-label="阅读视图"><svg width="13" height="13" viewBox="0 0 13 13"><path fill="none" stroke="#fff" d="M.5 1.500h5l1 1 1-1h5v9h-5l-1 1-1-1h-5zM6.500 2v11M2 4.500h3M2 6.500h3M2 8.500h3M8 4.500h3M8 6.500h3M8 8.500h3"/></svg></button>
                <button class="view" aria-label="幻灯片放映"><svg width="13" height="13" viewBox="0 0 13 13"><path fill="none" stroke="#fff" d="M0 1.500h13M1.500 2v5.500h10V2M6.500 8v4M4 12.500h5"/></svg></button>
                <button class="step">−</button>
                <input type="range" min="0" max="200" value="102" aria-label="缩放">
                <button class="step">+</button>
                <span class="percent">102%</span>
                <button class="fitwin" aria-label="适应窗口"><svg width="14" height="13" viewBox="0 0 14 13"><path fill="none" stroke="#ffd9cc" d="M.5.500h13v12H.5zM7 1v4M7 8v4M1 6.500h4M9 6.500h4M3 3l2 2M11 3L9 5M3 10l2-2M11 10L9 8"/></svg></button>
            </div>
        </footer>
        <div class="strip"></div>

        <footer class="taskbar">
            <button class="start" aria-label="开始"><svg width="17" height="17" viewBox="0 0 17 17"><path fill="#fff" d="M0 2l7-1v7H0zM8 1l9-1v8H8zM0 9h7v7l-7-1zM8 9h9v8l-9-1z"/></svg></button>
            <button aria-label="搜索"><svg width="16" height="16"><circle cx="8" cy="8" r="6.500" fill="none" stroke="#fff" stroke-width="2"/></svg></button>
            <button aria-label="任务视图"><svg width="17" height="16" viewBox="0 0 17 16"><path fill="none" stroke="#fff" d="M.5 0v3.500h11V0M.5 6.500h11v5H.5zM.5 16v-2.500h11V16M15.500 0v3M15.500 8v8"/><path fill="#fff" d="M14 4h3v3h-3z"/></svg></button>
            <button aria-label="Edge"><svg width="24" height="24" viewBox="0 0 24 24"><circle cx="12" cy="12" r="12" fill="#1a78c9"/><path fill="#55c7a6" d="M1 9C5-3 23-2 24 10c0 5-7 8-10 5 3-3 1-8-4-8-4 0-7 1-9 2z"/><path fill="#124f94" d="M8 12c-1 7 6 10 13 8-5 6-14 4-17-2-1-4 1-6 4-6z"/><path fill="#22363f" d="M14 15c-2-1-2-3-1-5 3 3 1 7 11 4l-2 4c-3 2-8 1-8-3z"/></svg></button>
            <button aria-label="文件资源管理器"><svg width="22" height="19" viewBox="0 0 22 19"><path fill="#e5b23f" d="M0 0h8l2 2h12v15H0z"/><path fill="#fbd872" d="M0 5h22v12H0z"/><path fill="#3f8fb9" d="M4 10h14v9h-4v-4H8v4H4z"/></svg></button>
            <button><span class="tile">TIA<em>V16</em></span></button>
            <button class="running" aria-label="PowerPoint"><svg width="23" height="23" viewBox="0 0 24 24"><use href="#ppt"/></svg></button>
            <button><span class="tile">PLC<em>SIM</em></span></button>
            <button aria-label="Skype"><svg width="22" height="22" viewBox="0 0 22 22"><path fill="#fff" d="M6 0l7 1c6 0 9 6 8 10 3 7-3 13-9 10C5 22 0 16 1 10-1 5 1 0 6 0z"/><circle cx="11" cy="11" r="8.500" fill="#27a9e1"/><path fill="none" stroke="#fff" stroke-width="2.500" d="M15 8c-1-3-8-3-8 0 0 4 8 2 8 6 0 3-7 3-8 0"/></svg></button>
            <time>13:25<br>2022/5/6</time>
        </footer>
    </div>

    <div class="sharebar">
        <span>当前正在演示</span>
        <button>授予控制权<i class="caret"></i></button>
        <div class="share-right">
            <svg width="13" height="13" viewBox="0 0 13 13"><path fill="#e8bd2c" d="M6.500 0L13 13H0z"/><path fill="#fff" d="M6 4h1.500v5H6zM6 10h1.500v1.500H6z"/></svg>
            <button><svg width="12" height="13" viewBox="0 0 12 13"><path stroke="#d9421c" stroke-width="4" d="M1 1l10 11M11 1L1 12"/></svg>停止演示</button>
            <i class="bar"></i>
            <svg width="12" height="14" viewBox="0 0 12 14"><path fill="#555" d="M2 0h8v1L9 2v4l3 2v1H7v5H5V9H0V8l3-2V2L2 1z"/></svg>
        </div>
    </div>
</body>
</html>
```

FILE: styles.css
```css
*, *::before, *::after {
    box-sizing: border-box;
}
body {
    margin: 0;
    height: 100vh;
    padding: 3px;
    overflow: hidden;
    background: #fde695;
    color: #444;
    font: 12px/16px "Noto Sans CJK SC", sans-serif;
}
button {
    display: flex;
    align-items: center;
    justify-content: center;
    margin: 0;
    padding: 0;
    border: none;
    background: none;
    color: inherit;
    font: inherit;
    white-space: nowrap;
}
input, select {
    margin: 0;
    font: inherit;
    color: inherit;
}
svg {
    flex: none;
}
.sprite {
    position: absolute;
    width: 0;
    height: 0;
}
.logo-latin {
    font: bold 40px "DejaVu Serif", serif;
    fill: #0b3c8c;
}
.logo-cn {
    font: bold 20px "Noto Sans CJK SC", sans-serif;
    fill: #0b3c8c;
}
.desktop {
    display: flex;
    flex-direction: column;
    height: 100%;
    border: 1px solid #3b3a2b;
    background: #fff;
}
.caret {
    flex: none;
    border: 3px solid transparent;
    border-top-color: currentColor;
    border-bottom: 0;
    margin-left: 3px;
}
.caret.up {
    border-top: 0;
    border-bottom: 3px solid currentColor;
}
.caret.wide {
    margin-left: 8px;
}
.pale {
    color: #bbb;
}
.bar {
    width: 1px;
    height: 21px;
    background: #d5d5d5;
}

/* title bar */
.titlebar {
    display: flex;
    justify-content: flex-end;
    height: 21px;
}
.quick {
    display: flex;
    align-items: center;
    gap: 14px;
    margin-right: auto;
    padding: 0 6px 4px;
}
.pattern {
    overflow: hidden;
    margin-right: -125px;
}
.winbuttons {
    display: flex;
    gap: 19px;
    padding: 0 6px 4px;
    font-weight: bold;
    font-size: 14px;
    color: #666;
    z-index: 1;
}

/* tabs */
.tabs {
    display: flex;
    flex: none;
    gap: 1px;
    height: 25px;
    border-bottom: 1px solid #d4d4d4;
}
.tabs button {
    padding: 0 14px;
}
.tabs .file {
    width: 55px;
    height: 24px;
    background: #dc5223;
    color: #fff;
}
.tabs .active {
    width: 51px;
    height: 25px;
    margin-left: 3px;
    padding: 0;
    border: 1px solid #d4d4d4;
    border-bottom-color: #fff;
    background: #fff;
    color: #c4532b;
}
.account {
    display: flex;
    align-items: center;
    gap: 4px;
    margin-left: auto;
    padding-right: 7px;
    color: #555;
    text-decoration: none;
    z-index: 1;
}
.account svg {
    margin-left: 4px;
}

/* ribbon */
.ribbon {
    display: flex;
    flex: none;
    height: 95px;
    padding: 3px 0;
    border-bottom: 1px solid #d0d0d0;
}
.group {
    display: flex;
    flex-direction: column;
    justify-content: space-between;
    flex: none;
    border-right: 1px solid #dadada;
}
.group footer {
    position: relative;
    height: 16px;
    color: #666;
    text-align: center;
}
.group footer svg {
    position: absolute;
    right: 4px;
    bottom: 0;
}
.clipboard { width: 113px; }
.slides { width: 121px; }
.font { width: 228px; }
.paragraph { width: 301px; }
.drawing { width: 331px; }
.editing { width: 75px; }
.save { width: 62px; }
.off {
    color: #a0a0a0;
}
.controls {
    display: flex;
}
.stack {
    display: flex;
    flex-direction: column;
}
.stack button {
    justify-content: flex-start;
    height: 23px;
    gap: 3px;
}
.big {
    flex-direction: column;
    justify-content: flex-start;
    width: 45px;
    line-height: 15px;
    padding-top: 3px;
}
.big svg {
    margin-bottom: 2px;
}
.big span {
    display: flex;
    align-items: center;
}
.big > .caret {
    margin: 4px 0 0;
}
.slides .big {
    width: 57px;
}
.slides .big svg {
    margin-bottom: 4px;
}
.save .big {
    width: 61px;
}
.rows {
    display: flex;
    flex-direction: column;
    gap: 8px;
    padding: 8px 4px 0;
}
.line {
    display: flex;
    align-items: center;
    height: 23px;
}
.font .line {
    gap: 9px;
}
.font .line.letters {
    gap: 0;
}
.font select {
    appearance: none;
    height: 23px;
    border: 1px solid #ddd;
    border-radius: 0;
    background: #fff url('data:image/svg+xml,<svg xmlns="http://www.w3.org/2000/svg" width="6" height="3"><path fill="%23bbb" d="M0 0h6L3 3z"/></svg>') no-repeat right 4px center;
}
.face {
    width: 101px;
}
.size {
    width: 44px;
    margin-left: -10px;
}
.font sup {
    font-size: 8px;
    line-height: 10px;
    align-self: flex-start;
}
.big-a {
    font-size: 16px;
}
.small-a {
    font-size: 13px;
}
.letters {
    font-size: 14px;
}
.letters button {
    width: 22px;
}
.letters .drop {
    width: 34px;
}
.letters s {
    font-size: 12px;
}
.spacing {
    font-size: 13px;
    border-bottom: 1px solid;
    line-height: 15px;
}
.shadow {
    text-shadow: 2px 1px 2px #bbb;
}
.paragraph .rows {
    width: 170px;
    padding-right: 0;
}
.paragraph .line {
    gap: 5px;
}
.paragraph .drop {
    gap: 4px;
}
.paragraph .aligns {
    gap: 8px;
}
.paragraph .line button {
    margin-left: 3px;
}
.paragraph .aligns button {
    margin-left: 0;
}
.aligns {
    padding-left: 3px;
}
.gallery {
    display: flex;
    height: 60px;
    margin: 3px 4px 0;
    border: 1px solid #aaa;
}
.gallery-nav {
    display: grid;
    width: 14px;
    border-left: 1px solid #bbb;
}
.gallery-nav button + button {
    border-top: 1px solid #bbb;
}
.gallery-nav .caret {
    margin: 0;
}
.drawing .styles {
    width: 50px;
    margin-right: 2px;
}
.editing .controls {
    padding-left: 6px;
}
.ab, .ac {
    font: bold 9px "Noto Sans", sans-serif;
    fill: #555;
}
.ac {
    fill: #3b6f97;
}
.collapse {
    align-self: flex-end;
    margin-left: auto;
    padding-right: 6px;
}

/* slide list */
.workspace {
    display: flex;
    flex: 1;
    min-height: 0;
    background: linear-gradient(#fff, #f4f4f4 60%, #eee);
}
.outline {
    display: flex;
    width: 299px;
    flex: none;
    overflow: hidden;
    border-right: 1px solid #d0d0d0;
}
.thumbs {
    flex: 1;
    margin: 0;
    padding: 0 21px 0 0;
    list-style: none;
}
.thumbs li {
    display: flex;
    margin-bottom: 18px;
    font: 17px/20px "Open Sans", sans-serif;
    color: #555;
}
.thumbs span {
    width: 24px;
    margin-top: -6px;
}
.thumb {
    flex: 1;
    height: 134px;
    border: 1px solid #c6c6c6;
    background: #fff;
}
.thumb svg {
    display: block;
    width: 100%;
    height: 100%;
}
.thumbs .tail {
    padding-left: 24px;
}
.tail .thumb {
    height: 4px;
    border-top: 0;
}
.current .thumb {
    border-color: #fff;
    outline: 3px solid #b9603f;
    outline-offset: -1px;
}
.thumbs .current {
    color: #c8613b;
}
.t3, .t4, .t8 {
    font: 3px "Noto Sans CJK SC", sans-serif;
    fill: #666;
}
.head .t3 {
    fill: #fff;
}
.t4 {
    font-size: 4px;
}
.t8 {
    font-size: 8px;
    fill: #333;
}
.strong {
    font-weight: bold;
    fill: #000;
}
.scroll {
    display: flex;
    flex-direction: column;
    width: 15px;
    padding-top: 2px;
    color: #777;
}
.scroll button {
    height: 15px;
    border: 1px solid #bbb;
    background: #fff;
}
.scroll .caret {
    margin: 0;
}
.track {
    display: flex;
    flex-direction: column;
    flex: 1;
    background: #ededed;
}
.track b {
    border: 1px solid #bbb;
    background: #fff;
}
.left-scroll {
    margin-right: 4px;
    padding-bottom: 2px;
}
.left-scroll b {
    height: 102px;
    margin-top: 462px;
}

/* editor */
.editor {
    display: flex;
    flex: 1;
    flex-direction: column;
    min-width: 0;
}
.stage {
    display: flex;
    flex: 1;
    min-height: 0;
}
.canvas {
    display: flex;
    flex: 1;
    justify-content: center;
    padding: 13px 0 16px 2px;
}
.slide {
    aspect-ratio: 1308 / 737;
    height: 100%;
    padding: 42px 89px 0;
    border: 1px solid #c8c8c8;
    background: #fff;
}
.slide-head {
    display: flex;
    justify-content: space-between;
    align-items: flex-start;
}
.slide h1 {
    margin: 0;
    padding-left: 10px;
    font-size: 24px;
    line-height: 40px;
    font-weight: 300;
    color: #222;
}
.logo {
    margin-top: 15px;
}
.right-scroll {
    width: 13px;
    padding-bottom: 22px;
}
.right-scroll .track b {
    height: 17px;
    margin-top: 416px;
}
.scroll .page {
    height: 17px;
    border: none;
    background: none;
}
.page path {
    fill: #666;
}
.notes {
    flex: none;
    height: 107px;
    padding: 6px 11px;
    border-top: 1px solid #d0d0d0;
    background: #efefef;
    font-size: 15px;
    line-height: 18px;
}
.notes p {
    margin: 0;
}

/* TIA Portal picture on the slide */
.tia {
    width: 70%;
    margin-top: 40px;
    border: 1px solid #777;
    background: #e8e8e8;
    color: #222;
    font: 10px/11px "Noto Sans", "Noto Sans CJK SC", sans-serif;
}
.tia-vscroll path, .zoomrow button path, .tree-scroll path {
    fill: none;
    stroke: #444;
    stroke-width: 2;
}
.device {
    display: flex;
    background: #fff;
}
.rack {
    flex: 1;
    min-width: 0;
}
.label text {
    font-size: 10px;
    fill: #fff;
}
.slots, .ranges {
    font-weight: 600;
    text-anchor: middle;
}
.ranges {
    fill: #fff;
}
.dim {
    fill: #d8dae4;
    font-size: 9px;
    font-weight: normal;
}
.siemens {
    font-size: 4px;
    font-weight: bold;
    fill: #fff;
}
.rail {
    font-size: 10px;
}
.halo {
    fill: #f2e600;
    mix-blend-mode: multiply;
}
.tia-vscroll {
    display: flex;
    flex-direction: column;
    width: 14px;
    margin-right: 3px;
    background: #c2c2c2;
}
.tia-vscroll button, .tia-vscroll b, .zoomrow button, .tree-scroll button {
    width: 14px;
    height: 14px;
    border: 1px solid #999;
    background: #eee;
}
.tia-vscroll b {
    margin: 1px 0 auto;
    color: #777;
    text-align: center;
}
.zoomrow {
    display: flex;
    height: 16px;
    border-bottom: 2px solid #222;
    background: #e8e8e8;
}
.zoomrow b {
    width: 68px;
    border: 1px solid #999;
    background: #e4e4e4;
    color: #888;
    font-size: 7px;
    line-height: 11px;
    text-align: center;
}
.zoomrow span {
    flex: 1;
    background: #c2c2c2;
}
.zoomrow select {
    appearance: none;
    width: 124px;
    height: 14px;
    margin: 0 13px 0 5px;
    padding: 0 2px;
    border: 1px solid #888;
    border-radius: 0;
    background: #fff url('data:image/svg+xml,<svg xmlns="http://www.w3.org/2000/svg" width="13" height="12"><path fill="%23ddd" stroke="%23999" d="M.5.5h12v11H.5z"/><path d="M3 4h7L6.5 8z"/></svg>') no-repeat right center;
    line-height: 12px;
}
.fit {
    margin: 1px 3px 0 13px;
}
.inspector-title {
    display: flex;
    height: 20px;
    padding-top: 2px;
    border-bottom: 2px solid #eee;
    background: #afafaf;
}
.inspector-title strong {
    margin: 0 auto 0 3px;
    font-size: 11px;
    line-height: 14px;
    font-weight: 600;
    color: #fff;
}
.inspector-title button {
    justify-content: flex-start;
    width: 60px;
    gap: 4px;
    padding-left: 3px;
    border-left: 1px solid #888;
    background: #d4d4d4;
    color: #555;
    font-size: 12px;
}
.inspector-title .message {
    width: 66px;
}
.inspector-title .on {
    background: #ececec;
    color: #000;
    font-weight: bold;
}
.info {
    width: 11px;
    margin: 0 3px 0 auto;
    border-radius: 6px;
    background: #e5b91c;
    color: #333;
    font: bold 9px/11px "Noto Sans", sans-serif;
}
.wins {
    margin: 2px 1px 0 14px;
}
.tia-tabs {
    display: flex;
    align-items: flex-end;
    gap: 3px;
    height: 20px;
    padding-left: 3px;
    border-bottom: 1px solid #777;
    background: #cbcbcb;
    font-size: 12px;
}
.tia-tabs button {
    height: 17px;
    padding: 0 14px 0 7px;
    border: 1px solid #888;
    border-bottom: 0;
    background: #d8d8d8;
    color: #555;
}
.tia-tabs .on {
    height: 18px;
    margin-bottom: -1px;
    padding: 0 14px 0 9px;
    background: #eee;
    color: #000;
    font-weight: bold;
}
.inspector {
    display: flex;
    height: 205px;
}
.tree {
    display: grid;
    grid-template-rows: repeat(14, 1fr);
    width: 141px;
    margin: 0;
    padding: 3px 0 0;
    list-style: none;
    background: linear-gradient(90deg, #f1f1f1 126px, #ccc 126px, #ccc 127px, #eee 127px);
}
.tree li {
    display: flex;
    align-items: center;
    padding: 0 3px 0 13px;
    min-height: 0;
    border-bottom: 1px solid #e4e4e4;
    white-space: nowrap;
}
.tree li.l2 {
    padding-left: 26px;
}
.tree mark {
    background: #c3cbd8;
    color: inherit;
}
.tree .closed::before, .tree .open::before {
    content: "";
    width: 4px;
    margin: 0 5px 0 -9px;
    border: 3px solid transparent;
    border-left: 4px solid #000;
    border-right: 0;
}
.tree .open::before {
    width: 8px;
    margin: 0 3px 0 -11px;
    border: 4px solid transparent;
    border-top-color: #000;
    border-bottom: 0;
}
.flag::after, .field i {
    content: "";
    width: 9px;
    height: 12px;
    margin-left: auto;
    border: 1px solid #d6cc3a;
    background: #f7e600;
}
.tree-scroll {
    display: flex;
    flex-direction: column;
    width: 14px;
    background: #c2c2c2;
}
.tree-scroll b {
    display: grid;
    place-items: center;
    flex: 1;
    margin-top: 57px;
    padding-top: 66px;
    border: 1px solid #999;
    background: #eee;
    color: #888;
}
.splitter {
    display: flex;
    flex-direction: column;
    justify-content: flex-end;
    gap: 14px;
    width: 6px;
    margin-left: 1px;
    border: 1px solid #aaa;
    background: #d5d5d5;
    font-size: 7px;
}
.params {
    position: relative;
    flex: 1;
    padding: 10px 0 0 9px;
}
.params h2 {
    display: flex;
    align-items: flex-end;
    gap: 9px;
    margin: 0 0 6px 2px;
    font-size: 10px;
    line-height: 13px;
    font-weight: normal;
}
.params h2::after {
    content: "";
    flex: 1;
    border-bottom: 1px solid #555;
    margin-bottom: 1px;
}
.params h3 {
    margin: 0 0 17px 12px;
    font-size: 11px;
    line-height: 14px;
    font-weight: 600;
}
.params fieldset {
    height: 92px;
    margin: 0 0 5px;
    padding: 3px 0;
    border: 0;
    background: #cbcbcb;
}
.params .second {
    height: 69px;
    padding-top: 18px;
}
.field {
    display: flex;
    align-items: flex-end;
    margin-bottom: 6px;
    height: 22px;
}
.second .field:first-child {
    height: 14px;
}
.field label {
    width: 155px;
    margin-right: 7px;
    padding-bottom: 1px;
    text-align: right;
}
.field input {
    width: 144px;
    height: 14px;
    padding: 0 3px;
    border: 1px solid #999;
    background: #fff;
}
.field i {
    margin: 0 0 1px 8px;
}
.unit {
    display: flex;
    width: 144px;
    height: 14px;
    border: 1px solid #999;
    background: #ddd;
}
.unit input {
    width: 122px;
    height: 12px;
    border: 0;
}
.unit em {
    padding-left: 3px;
    font-style: normal;
}
.ring {
    position: absolute;
    left: 7px;
    top: 45px;
    fill: none;
    stroke: #d6452f;
    stroke-width: 2;
}

/* status bar */
.status {
    display: flex;
    align-items: center;
    flex: none;
    height: 22px;
    padding: 0 0 2px 3px;
    background: #dc5223;
    color: #fff;
    font-family: "Open Sans", "Noto Sans CJK SC", sans-serif;
}
.spell {
    margin: 0 17px 0 24px;
}
.views {
    display: flex;
    align-items: center;
    height: 22px;
    margin-left: auto;
}
.views .text {
    gap: 4px;
    margin-right: 20px;
}
.views .view {
    width: 38px;
    height: 22px;
}
.views .on {
    background: #c24318;
}
.step {
    width: 13px;
    font-size: 14px;
    font-weight: bold;
}
.views input {
    appearance: none;
    width: 103px;
    height: 1px;
    background: #fff;
}
.views input::-webkit-slider-thumb {
    appearance: none;
    width: 4px;
    height: 12px;
    background: #fff;
}
.percent {
    margin: 0 14px;
}
.fitwin {
    margin-right: 2px;
}
.strip {
    flex: none;
    height: 8px;
    border-top: 1px solid #eadfda;
    border-bottom: 2px solid #fff;
    background: linear-gradient(#b8b2af 4px, #222 4px);
}

/* taskbar */
.taskbar {
    display: flex;
    flex: none;
    height: 28px;
    overflow: hidden;
    background: linear-gradient(90deg, #22363f 40%, #1a2742 80%);
    color: #fff;
}
.taskbar button {
    width: 49px;
    overflow: hidden;
}
.taskbar .start {
    width: 44px;
    padding-right: 4px;
}
.taskbar .running {
    width: 45px;
    margin: 0 2px;
    background: #44545c;
}
.tile {
    padding-bottom: 2px;
    font: 15px/12px "Noto Sans", sans-serif;
}
.tile em {
    display: block;
    color: #b9b9ee;
    font-style: normal;
    font-weight: 600;
}
.taskbar time {
    margin: -6px 7px 0 auto;
    text-align: center;
    font: 12px/18px "Open Sans", sans-serif;
}

/* screen sharing bar */
.sharebar {
    position: absolute;
    top: 0;
    left: 24%;
    right: 24%;
    display: flex;
    align-items: center;
    height: 36px;
    padding: 0 10px 4px 10px;
    border: 1px solid #999;
    border-top-color: #ddd;
    background: linear-gradient(#fff 60%, #e2e2e5);
    color: #333;
    font-size: 13px;
}
.sharebar button {
    height: 27px;
    margin-left: 14px;
    padding: 0 5px 0 10px;
    border: 1px solid #999;
    border-radius: 3px;
    background: linear-gradient(#fff, #eee);
    color: #222;
    font-size: 11px;
    font-weight: 500;
    gap: 4px;
}
.share-right {
    display: flex;
    align-items: center;
    gap: 5px;
    margin-left: auto;
}
.share-right button {
    margin-left: 8px;
    padding: 0 8px 0 5px;
    gap: 13px;
}
.share-right > svg:last-child {
    margin-left: 5px;
}
```
